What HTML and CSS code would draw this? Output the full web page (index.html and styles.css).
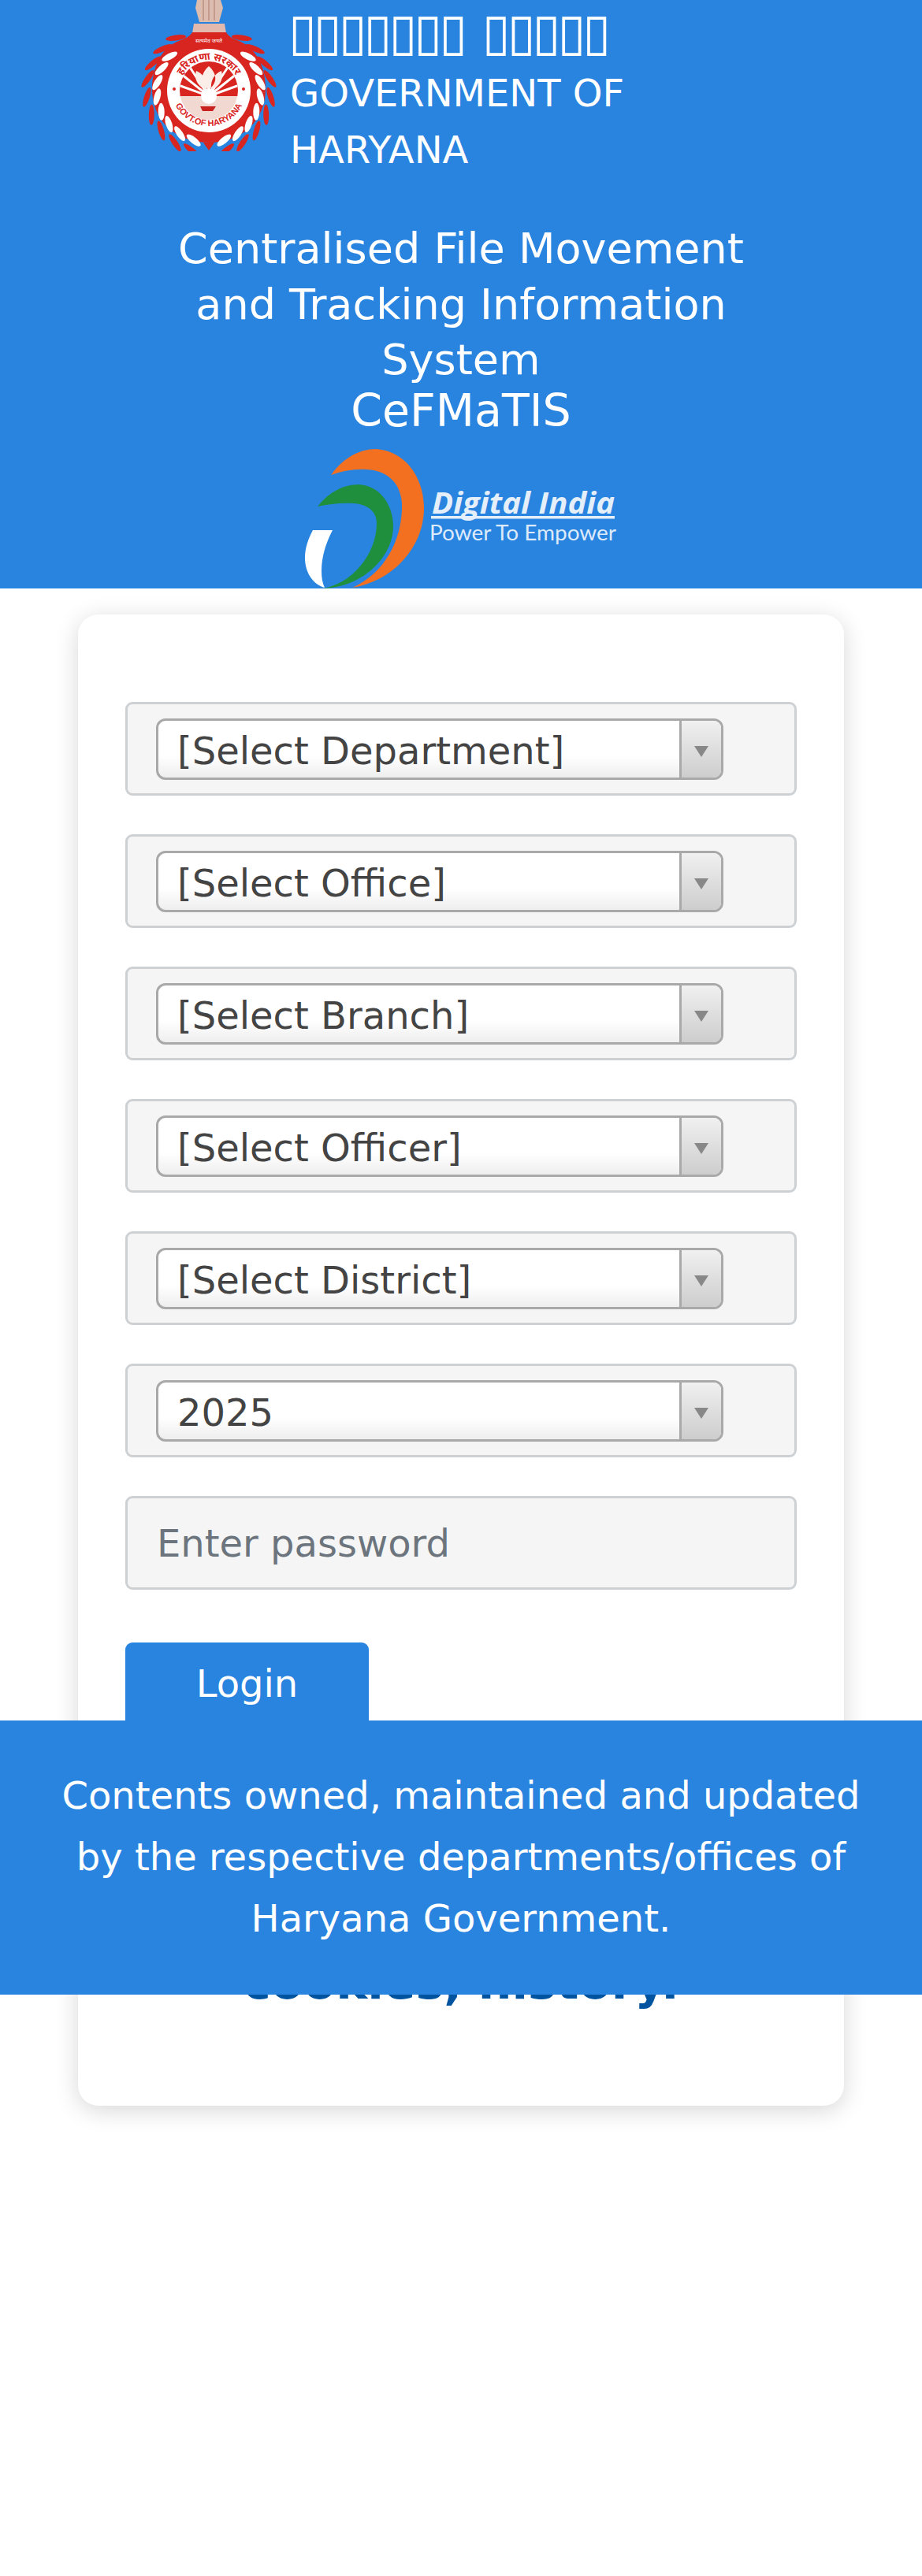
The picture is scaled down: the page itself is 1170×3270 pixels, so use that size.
FILE: index.html
```html
<!DOCTYPE html>
<html lang="en">
<head>
<meta charset="utf-8">
<title>CeFMaTIS</title>
<link rel="stylesheet" href="styles.css">
</head>
<body>
<header class="top">
  <div class="brand">
    <svg class="emblem" viewBox="174 0 178 192" aria-hidden="true">
      <defs>
        <ellipse id="white-leaf" cx="265" cy="49" rx="11" ry="4" transform="rotate(22 265 49)" fill="#fff"/>
        <ellipse id="red-leaf" cx="265" cy="36" rx="13" ry="3.5" transform="rotate(24 265 36)" fill="#d9251f"/>
        <g id="half-wreath">
          <use href="#red-leaf" transform="rotate(-32 265 115)"/>
          <use href="#red-leaf" transform="rotate(-48 265 115)"/>
          <use href="#red-leaf" transform="rotate(-64 265 115)"/>
          <use href="#red-leaf" transform="rotate(-79 265 115)"/>
          <use href="#red-leaf" transform="rotate(-96 265 115)"/>
          <use href="#red-leaf" transform="rotate(-113 265 115)"/>
          <use href="#red-leaf" transform="rotate(-130 265 115)"/>
          <use href="#red-leaf" transform="rotate(-147 265 115)"/>
          <use href="#red-leaf" transform="rotate(-164 265 115)"/>
        </g>
        <g id="half-band">
          <use href="#white-leaf" transform="rotate(-49 265 115)"/>
          <use href="#white-leaf" transform="rotate(-65 265 115)"/>
          <use href="#white-leaf" transform="rotate(-81 265 115)"/>
          <use href="#white-leaf" transform="rotate(-97 265 115)"/>
          <use href="#white-leaf" transform="rotate(-114 265 115)"/>
          <use href="#white-leaf" transform="rotate(-130 265 115)"/>
          <use href="#white-leaf" transform="rotate(-146 265 115)"/>
          <use href="#white-leaf" transform="rotate(-163 265 115)"/>
        </g>
        <clipPath id="inner-disc"><circle cx="265" cy="115" r="37"/></clipPath>
        <path id="arc-top" d="M226 115A39 39 0 0 1 304 115"/>
        <path id="arc-bottom" d="M218 113A47 47 0 0 0 312 113"/>
      </defs>
      <use href="#half-wreath"/>
      <use href="#half-wreath" transform="matrix(-1 0 0 1 530 0)"/>
      <path d="M250 0h30l3 10-5 18h-25l-5-18z" fill="#dcbcae"/>
      <path d="M258 0v26M265 0v26M272 0v26" stroke="#c49c8e" stroke-width="2"/>
      <path d="M246 30h39l2 12h-43z" fill="#e3b9ad"/>
      <path d="M244 41h43c3 5 8 8 14 10 25 9 36 35 36 62 0 40-30 68-72 68s-72-28-72-68c0-27 11-53 36-62 6-2 12-5 15-10z" fill="#d9251f"/>
      <path d="M258 181h14l-7 10z" fill="#d9251f"/>
      <text class="em-motto" x="265" y="54" text-anchor="middle">सत्यमेव जयते</text>
      <use href="#half-band"/>
      <use href="#half-band" transform="matrix(-1 0 0 1 530 0)"/>
      <circle cx="265" cy="115" r="53" fill="#fff"/>
      <g clip-path="url(#inner-disc)">
        <path d="M225 75h80v47h-80z" fill="#d9251f"/>
        <path d="M225 122h80v35h-80z" fill="#f1d8d1"/>
        <path d="M265 122 226 108M265 122 230 94M265 122 240 84M265 122 304 108M265 122 300 94M265 122 290 84" stroke="#fff" stroke-width="3"/>
        <path d="M265 84c10 9 12 20 0 30-12-10-10-21 0-30zM249 90c10 4 14 13 13 24-11-4-16-13-13-24zM281 90c-10 4-14 13-13 24 11-4 16-13 13-24z" fill="#fbeee9"/>
        <circle cx="265" cy="122" r="10" fill="#fff"/>
        <path d="M254 135h20l-4 6h-13z" fill="#c9211d"/>
      </g>
      <text class="em-hindi"><textPath href="#arc-top" startOffset="50%" text-anchor="middle">हरियाणा सरकार</textPath></text>
      <text class="em-govt"><textPath href="#arc-bottom" startOffset="50%" text-anchor="middle">GOVT.OF HARYANA</textPath></text>
      <circle cx="221" cy="113" r="2" fill="#d9251f"/>
      <circle cx="309" cy="113" r="2" fill="#d9251f"/>
    </svg>
    <div class="brand-text">
      <div class="hindi" role="img" aria-label="हरियाणा सरकार">▯▯▯▯▯▯▯ ▯▯▯▯▯</div>
      <div class="gov">GOVERNMENT OF HARYANA</div>
    </div>
  </div>
  <h1 class="title">Centralised File Movement and Tracking Information System</h1>
  <div class="abbr">CeFMaTIS</div>
  <svg class="digital" viewBox="385 567 400 180" aria-hidden="true">
    <path d="M420 603C436 581 456 570 477 570C514 572 538 606 538 645C538 695 498 738 447 746C492 726 511 680 510 640C509 612 490 597 465 596C449 595 434 598 420 603Z" fill="#f37021"/>
    <path d="M403 643C418 624 436 615 455 615C482 616 499 641 499 668C499 706 462 745 410 747C446 741 478 704 478 664C478 649 466 640 449 639C432 638 417 640 403 643Z" fill="#1f8f3d"/>
    <path d="M397 673H422C413 690 408 708 408 725C408 733 409 740 412 746C398 742 387 728 387 708C387 696 391 684 397 673Z" fill="#fff"/>
    <text class="di-name" x="548" y="652" textLength="232" lengthAdjust="spacingAndGlyphs">Digital India</text>
    <path d="M547 655h233v3.500H547z" fill="#e4effa"/>
    <text class="di-sub" x="545" y="686" textLength="237" lengthAdjust="spacingAndGlyphs">Power To Empower</text>
  </svg>
</header>

<main class="card">
  <form class="login">
    <div class="field"><div class="combo"><span class="combo-text">[Select Department]</span><span class="combo-btn"><i class="arrow"></i></span></div></div>
    <div class="field"><div class="combo"><span class="combo-text">[Select Office]</span><span class="combo-btn"><i class="arrow"></i></span></div></div>
    <div class="field"><div class="combo"><span class="combo-text">[Select Branch]</span><span class="combo-btn"><i class="arrow"></i></span></div></div>
    <div class="field"><div class="combo"><span class="combo-text">[Select Officer]</span><span class="combo-btn"><i class="arrow"></i></span></div></div>
    <div class="field"><div class="combo"><span class="combo-text">[Select District]</span><span class="combo-btn"><i class="arrow"></i></span></div></div>
    <div class="field"><div class="combo"><span class="combo-text">2025</span><span class="combo-btn"><i class="arrow"></i></span></div></div>
    <div class="field field-input">Enter password</div>
    <div class="btn">Login</div>
  </form>
  <p class="note">cookies, history.</p>
</main>

<footer class="foot">Contents owned, maintained and updated by the respective departments/offices of Haryana Government.</footer>
</body>
</html>
```
FILE: styles.css
```css
html, body {
  margin: 0;
  padding: 0;
  background: #fff;
}
body {
  position: relative;
  height: 3270px;
  overflow: hidden;
  font-family: "DejaVu Sans", sans-serif;
}
.top {
  height: 747px;
  background: #2984e0;
  color: #fff;
  display: flex;
  flex-direction: column;
  align-items: center;
  overflow: hidden;
}
.brand {
  align-self: flex-start;
  display: flex;
  align-items: flex-start;
  margin-left: 174px;
  height: 225px;
}
.emblem {
  width: 178px;
  height: 192px;
  flex: none;
}
.em-motto {
  font-family: "Noto Sans", "DejaVu Sans", sans-serif;
  font-size: 7px;
  fill: #fff;
}
.em-hindi {
  font-family: "Noto Sans", "DejaVu Sans", sans-serif;
  font-size: 13px;
  font-weight: 700;
  fill: #d9251f;
}
.em-govt {
  font-family: "Liberation Sans", sans-serif;
  font-size: 11px;
  font-weight: 700;
  fill: #d9251f;
}
.brand-text {
  width: 480px;
  margin-left: 16px;
}
.hindi {
  margin-left: -2px;
  font-size: 65px;
  line-height: 82px;
  letter-spacing: -3.900px;
  word-spacing: 6px;
  white-space: nowrap;
}
.gov {
  font-size: 48px;
  line-height: 72px;
}
.title {
  width: 780px;
  margin: 56px 0 0;
  font-size: 54px;
  font-weight: 400;
  line-height: 70.500px;
  text-align: center;
}
.abbr {
  font-size: 57px;
  line-height: 72px;
  margin-top: -8px;
}
.digital {
  width: 400px;
  height: 180px;
  margin-top: 10.500px;
  flex: none;
}
.di-name {
  font-family: "Open Sans", sans-serif;
  font-style: italic;
  font-weight: 700;
  font-size: 37px;
  fill: #e4effa;
}
.di-sub {
  font-family: "Lato", sans-serif;
  font-size: 26px;
  fill: #dceafa;
}
.card {
  position: relative;
  box-sizing: border-box;
  width: 972px;
  height: 1893px;
  margin: 33px 0 0 99px;
  padding: 111px 60px 0;
  background: #fff;
  border-radius: 26px;
  box-shadow: 0 6px 30px rgba(0, 0, 0, 0.16);
}
.login {
  display: flex;
  flex-direction: column;
  gap: 49px;
}
.field {
  box-sizing: border-box;
  height: 119px;
  padding: 18px 0 0 36px;
  background: #f5f5f5;
  border: 3px solid #ced1d4;
  border-radius: 9px;
}
.combo {
  box-sizing: border-box;
  display: flex;
  width: 720px;
  height: 78px;
  background: linear-gradient(#fff 62%, #eee);
  border: 3px solid #a9a9a9;
  border-radius: 12px;
  overflow: hidden;
}
.combo-text {
  flex: 1;
  padding-left: 24px;
  font-size: 48px;
  line-height: 76px;
  color: #444;
  white-space: nowrap;
}
.combo-btn {
  box-sizing: border-box;
  flex: none;
  width: 53px;
  display: flex;
  align-items: center;
  justify-content: center;
  background: linear-gradient(#f0f0f0, #cdcdcd);
  border-left: 3px solid #a9a9a9;
}
.arrow {
  width: 0;
  height: 0;
  margin-top: 5px;
  border-left: 9px solid transparent;
  border-right: 9px solid transparent;
  border-top: 14px solid #888;
}
.field-input {
  padding: 0 0 0 37px;
  font-size: 48px;
  line-height: 114px;
  color: #6c757d;
}
.btn {
  width: 309px;
  height: 116px;
  margin-top: 18px;
  background: #2984e0;
  border-radius: 9px;
  color: #fff;
  font-size: 48px;
  line-height: 104px;
  text-align: center;
}
.note {
  position: absolute;
  left: 0;
  right: 0;
  top: 1700px;
  margin: 0;
  font-size: 60px;
  font-weight: 700;
  line-height: 72px;
  color: #00539f;
  text-align: center;
}
.foot {
  position: absolute;
  left: 0;
  right: 0;
  top: 2184px;
  box-sizing: border-box;
  height: 348px;
  padding: 56px 60px 0;
  background: #2984e0;
  color: #fff;
  font-size: 48px;
  line-height: 78px;
  text-align: center;
}
```
